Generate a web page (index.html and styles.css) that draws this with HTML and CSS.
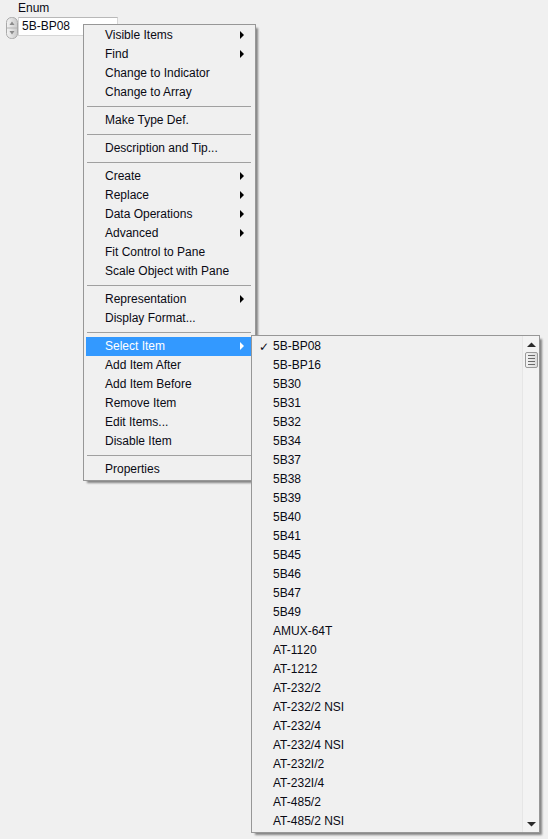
FILE: index.html
```html
<!DOCTYPE html>
<html>
<head>
<meta charset="utf-8">
<link rel="stylesheet" href="styles.css">
</head>
<body>
<div class="enum">
  <div class="enum-label">Enum</div>
  <div class="enum-ctrl">
    <div class="spin">
      <svg width="12" height="22" viewBox="0 0 12 22">
        <defs>
          <linearGradient id="sg" x1="0" y1="0" x2="1" y2="0">
            <stop offset="0" stop-color="#f4f4f4"/>
            <stop offset="1" stop-color="#c9c9c9"/>
          </linearGradient>
        </defs>
        <rect x="0.5" y="0.5" width="11" height="21" rx="5" fill="url(#sg)" stroke="#a9a9a9"/>
        <line x1="1" y1="11" x2="11" y2="11" stroke="#b4b4b4"/>
        <path d="M3.5 8 L6 4.5 L8.5 8 Z" fill="#8a8a8a"/>
        <path d="M3.5 14 L6 17.5 L8.5 14 Z" fill="#8a8a8a"/>
      </svg>
    </div>
    <div class="field">5B-BP08</div>
  </div>
</div>

<div class="menu main-menu">
  <div class="item">Visible Items<span class="arrow"></span></div>
  <div class="item">Find<span class="arrow"></span></div>
  <div class="item">Change to Indicator</div>
  <div class="item">Change to Array</div>
  <div class="sep"></div>
  <div class="item">Make Type Def.</div>
  <div class="sep"></div>
  <div class="item">Description and Tip...</div>
  <div class="sep"></div>
  <div class="item">Create<span class="arrow"></span></div>
  <div class="item">Replace<span class="arrow"></span></div>
  <div class="item">Data Operations<span class="arrow"></span></div>
  <div class="item">Advanced<span class="arrow"></span></div>
  <div class="item">Fit Control to Pane</div>
  <div class="item">Scale Object with Pane</div>
  <div class="sep"></div>
  <div class="item">Representation<span class="arrow"></span></div>
  <div class="item">Display Format...</div>
  <div class="sep"></div>
  <div class="item active">Select Item<span class="arrow"></span></div>
  <div class="item">Add Item After</div>
  <div class="item">Add Item Before</div>
  <div class="item">Remove Item</div>
  <div class="item">Edit Items...</div>
  <div class="item">Disable Item</div>
  <div class="sep"></div>
  <div class="item">Properties</div>
</div>

<div class="menu sub-menu">
  <div class="list">
    <div class="item checked"><span class="check">&#x2713;</span>5B-BP08</div>
    <div class="item">5B-BP16</div>
    <div class="item">5B30</div>
    <div class="item">5B31</div>
    <div class="item">5B32</div>
    <div class="item">5B34</div>
    <div class="item">5B37</div>
    <div class="item">5B38</div>
    <div class="item">5B39</div>
    <div class="item">5B40</div>
    <div class="item">5B41</div>
    <div class="item">5B45</div>
    <div class="item">5B46</div>
    <div class="item">5B47</div>
    <div class="item">5B49</div>
    <div class="item">AMUX-64T</div>
    <div class="item">AT-1120</div>
    <div class="item">AT-1212</div>
    <div class="item">AT-232/2</div>
    <div class="item">AT-232/2 NSI</div>
    <div class="item">AT-232/4</div>
    <div class="item">AT-232/4 NSI</div>
    <div class="item">AT-232I/2</div>
    <div class="item">AT-232I/4</div>
    <div class="item">AT-485/2</div>
    <div class="item">AT-485/2 NSI</div>
  </div>
  <div class="scrollbar">
    <div class="sb-btn">
      <svg width="9" height="5" viewBox="0 0 9 5"><path d="M0 5 L4.5 0.5 L9 5 Z" fill="#2b2b2b"/></svg>
    </div>
    <div class="thumb">
      <span></span><span></span><span></span><span></span>
    </div>
    <div class="track"></div>
    <div class="sb-btn">
      <svg width="9" height="5" viewBox="0 0 9 5"><path d="M0 0 L4.5 4.5 L9 0 Z" fill="#2b2b2b"/></svg>
    </div>
  </div>
</div>
</body>
</html>
```

FILE: styles.css
```css
html, body {
  margin: 0;
  padding: 0;
}
body {
  width: 548px;
  height: 839px;
  background: #f0f0f0;
  font-family: "Liberation Sans", Arial, sans-serif;
  font-size: 12px;
  color: #0a0a14;
  overflow: hidden;
  position: relative;
}

.enum {
  padding: 1px 0 0 6px;
}
.enum-label {
  padding-left: 12px;
  height: 16px;
  line-height: 14px;
  font-size: 12px;
}
.enum-ctrl {
  display: flex;
  align-items: flex-start;
}
.spin {
  width: 12px;
  height: 22px;
}
.spin svg {
  display: block;
}
.field {
  width: 95px;
  height: 17px;
  background: #fff;
  border: 1px solid #d6d6d6;
  border-top-color: #b8b8b8;
  padding-left: 3px;
  line-height: 17px;
}

.menu {
  position: absolute;
  background: #f0f0f0;
  border: 1px solid #979797;
  box-shadow: 3px 3px 2px -1px rgba(0, 0, 0, 0.45);
}
.main-menu {
  left: 83px;
  top: 24px;
  width: 173px;
  padding: 1px 4px 1px 2px;
  box-sizing: border-box;
}
.item {
  position: relative;
  height: 19px;
  line-height: 19px;
  padding-left: 19px;
  white-space: nowrap;
}
.item.active {
  background: #3399ff;
  color: #fff;
}
.arrow {
  position: absolute;
  right: 7px;
  top: 5px;
  width: 0;
  height: 0;
  border-top: 4px solid transparent;
  border-bottom: 4px solid transparent;
  border-left: 4px solid #000;
}
.item.active .arrow {
  border-left-color: #fff;
}
.sep {
  height: 4px;
  margin: 0 0 4px 1px;
  border-bottom: 1px solid #a0a0a0;
}

.sub-menu {
  left: 251px;
  top: 335px;
  width: 289px;
  height: 498px;
  box-sizing: border-box;
  display: flex;
}
.list {
  flex: 1;
  padding-top: 1px;
}
.list .item {
  padding-left: 21px;
}
.check {
  position: absolute;
  left: 7px;
  top: 1px;
  font-family: "DejaVu Sans", sans-serif;
  font-size: 12px;
  font-weight: bold;
}
.scrollbar {
  width: 16px;
  border-left: 1px solid #e6e6e6;
  background: #f3f3f3;
  display: flex;
  flex-direction: column;
  align-items: center;
}
.sb-btn {
  height: 16px;
  display: flex;
  align-items: center;
  justify-content: center;
  width: 100%;
}
.sb-btn svg {
  display: block;
}
.thumb {
  width: 11px;
  height: 14px;
  border: 1px solid #9a9a9a;
  border-radius: 2px;
  background: linear-gradient(to right, #f4f4f4, #dcdcdc);
  display: flex;
  flex-direction: column;
  justify-content: center;
  align-items: center;
  gap: 2px;
}
.thumb span {
  display: block;
  width: 7px;
  height: 1px;
  background: #6a6a6a;
}
.track {
  flex: 1;
}
```
